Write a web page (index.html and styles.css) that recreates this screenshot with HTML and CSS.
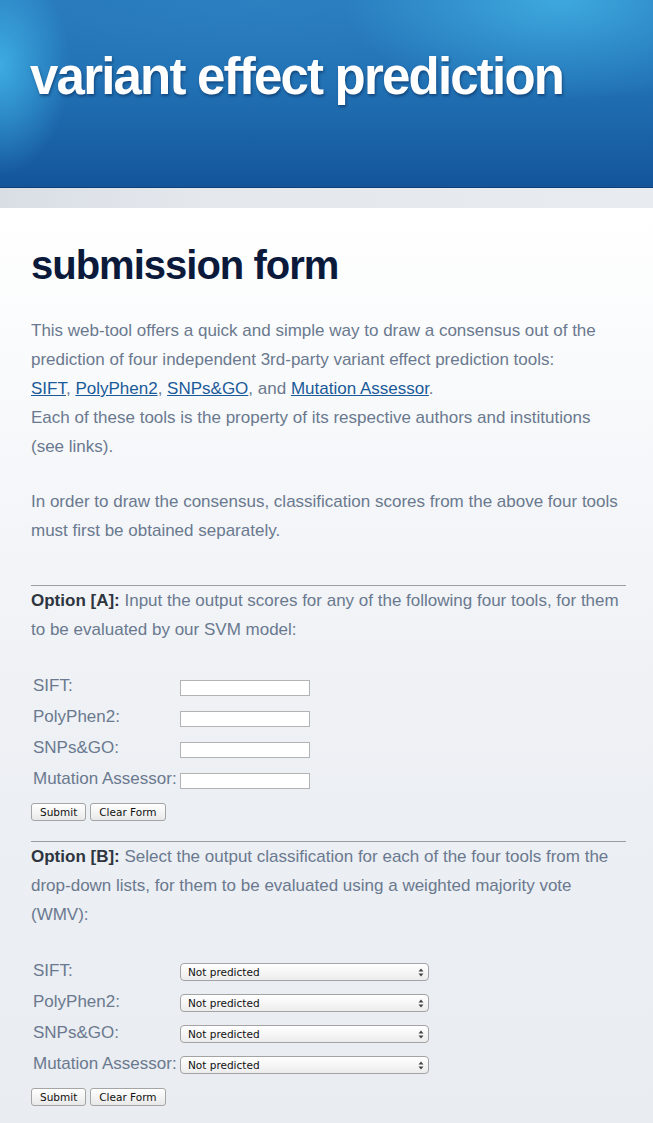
FILE: index.html
```html
<!DOCTYPE html>
<html>
<head>
<meta charset="utf-8">
<title>variant effect prediction</title>
<link rel="stylesheet" href="styles.css">
</head>
<body>
<header class="masthead">
  <h1 class="site-title">variant effect prediction</h1>
</header>
<div class="band"></div>
<main class="content">
  <h2 class="page-title">submission form</h2>
  <p class="text">This web-tool offers a quick and simple way to draw a consensus out of the prediction of four independent 3rd-party variant effect prediction tools:<br>
  <a href="#">SIFT</a>, <a href="#">PolyPhen2</a>, <a href="#">SNPs&amp;GO</a>, and <a href="#">Mutation Assessor</a>.<br>
  Each of these tools is the property of its respective authors and institutions (see links).</p>
  <p class="text">In order to draw the consensus, classification scores from the above four tools must first be obtained separately.</p>

  <hr class="rule rule-a">
  <form class="option">
    <p class="text"><b class="opt">Option [A]:</b> Input the output scores for any of the following four tools, for them to be evaluated by our SVM model:</p>
    <table class="fields">
      <tr><td class="lbl">SIFT:</td><td><input class="score" type="text"></td></tr>
      <tr><td class="lbl">PolyPhen2:</td><td><input class="score" type="text"></td></tr>
      <tr><td class="lbl">SNPs&amp;GO:</td><td><input class="score" type="text"></td></tr>
      <tr><td class="lbl">Mutation Assessor:</td><td><input class="score" type="text"></td></tr>
    </table>
    <div class="buttons">
      <button type="button" class="btn">Submit</button>
      <button type="reset" class="btn">Clear Form</button>
    </div>
  </form>

  <hr class="rule rule-b">
  <form class="option">
    <p class="text"><b class="opt">Option [B]:</b> Select the output classification for each of the four tools from the drop-down lists, for them to be evaluated using a weighted majority vote (WMV):</p>
    <table class="fields">
      <tr><td class="lbl">SIFT:</td><td><span class="sel"><select><option>Not predicted</option></select><svg class="arrows" width="6" height="9" viewBox="0 0 6 9"><path d="M0.5 3.5 L3 0.5 L5.5 3.5 Z M0.5 5.5 L3 8.5 L5.5 5.5 Z" fill="#444"/></svg></span></td></tr>
      <tr><td class="lbl">PolyPhen2:</td><td><span class="sel"><select><option>Not predicted</option></select><svg class="arrows" width="6" height="9" viewBox="0 0 6 9"><path d="M0.5 3.5 L3 0.5 L5.5 3.5 Z M0.5 5.5 L3 8.5 L5.5 5.5 Z" fill="#444"/></svg></span></td></tr>
      <tr><td class="lbl">SNPs&amp;GO:</td><td><span class="sel"><select><option>Not predicted</option></select><svg class="arrows" width="6" height="9" viewBox="0 0 6 9"><path d="M0.5 3.5 L3 0.5 L5.5 3.5 Z M0.5 5.5 L3 8.5 L5.5 5.5 Z" fill="#444"/></svg></span></td></tr>
      <tr><td class="lbl">Mutation Assessor:</td><td><span class="sel"><select><option>Not predicted</option></select><svg class="arrows" width="6" height="9" viewBox="0 0 6 9"><path d="M0.5 3.5 L3 0.5 L5.5 3.5 Z M0.5 5.5 L3 8.5 L5.5 5.5 Z" fill="#444"/></svg></span></td></tr>
    </table>
    <div class="buttons">
      <button type="button" class="btn">Submit</button>
      <button type="reset" class="btn">Clear Form</button>
    </div>
  </form>
</main>
</body>
</html>
```

FILE: styles.css
```css
html, body {
  margin: 0;
  padding: 0;
}
body {
  font-family: "Liberation Sans", Arial, Helvetica, sans-serif;
  background: #e9ecf0;
  min-height: 1123px;
}
.masthead {
  box-sizing: border-box;
  border-bottom: 1px solid #0c3f74;
  height: 188px;
  background:
    radial-gradient(ellipse 70px 110px at 0px 65px, rgba(70,190,240,0.75), rgba(70,190,240,0) 100%),
    radial-gradient(ellipse 220px 100px at 560px 0px, rgba(70,185,235,0.75), rgba(70,185,235,0) 100%),
    radial-gradient(ellipse 380px 90px at 260px 0px, rgba(60,150,210,0.35), rgba(60,150,210,0) 100%),
    linear-gradient(to bottom, #2475b7 0%, #2171b4 45%, #1a62a6 75%, #14559a 100%);
  padding: 51px 0 0 30px;
}
.site-title {
  margin: 0;
  font-size: 51px;
  line-height: 1;
  letter-spacing: -1.8px;
  font-weight: bold;
  color: #fff;
  text-shadow: 1px 2px 3px rgba(0,20,60,0.45);
}
.band {
  height: 20px;
  background: linear-gradient(to right, #d9dee5 0%, #e4e8ed 30%, #e8ebef 100%);
}
.content {
  padding: 37px 27px 20px 31px;
  background: linear-gradient(to bottom, #ffffff 0px, #f3f5f8 330px, #eceff3 600px, #e9ecf0 100%);
  min-height: 880px;
  box-sizing: border-box;
}
.page-title {
  margin: 0 0 31px 0;
  font-size: 40px;
  line-height: 1;
  letter-spacing: -1px;
  font-weight: bold;
  color: #0b1a3b;
}
.text {
  margin: 0 0 26px 0;
  font-size: 17px;
  line-height: 29px;
  color: #6a798f;
}
.text a {
  color: #1a5a99;
  text-decoration: underline;
}
.opt {
  color: #2e3540;
}
.rule {
  border: 0;
  border-top: 1px solid #9a9ea4;
  margin: 0;
  height: 0;
}
.rule-a {
  margin-top: 40px;
}
.rule-b {
  margin-top: 20px;
}
.option .text {
  margin-bottom: 27px;
}
.fields {
  border-collapse: separate;
  border-spacing: 0 2px;
  margin: -2px 0 0 0;
}
.fields td {
  padding: 0;
  font-size: 17px;
  line-height: 29px;
  color: #6a798f;
  vertical-align: middle;
}
.fields td.lbl {
  padding-left: 2px;
  width: 147px;
  white-space: nowrap;
}
.score {
  display: block;
  width: 130px;
  height: 16px;
  box-sizing: border-box;
  border: 1px solid #b3b3b3;
  background: #fff;
  margin: 4px 0 0 0;
  padding: 0;
}
.sel {
  position: relative;
  display: block;
  width: 249px;
  height: 18px;
  margin-top: 3px;
}
.sel select {
  -webkit-appearance: none;
  appearance: none;
  display: block;
  width: 249px;
  height: 18px;
  box-sizing: border-box;
  margin: 0;
  border: 1px solid #a3a3a3;
  border-radius: 4px;
  background: linear-gradient(to bottom, #ffffff 0%, #f6f6f6 50%, #ececec 100%);
  font-family: "DejaVu Sans", "Lucida Grande", sans-serif;
  font-size: 10.5px;
  color: #111;
  padding: 0 0 0 7px;
  line-height: 16px;
}
.arrows {
  position: absolute;
  right: 5px;
  top: 5px;
  pointer-events: none;
}
.buttons {
  display: flex;
  gap: 4px;
  margin-top: 8px;
}
.btn {
  height: 18px;
  box-sizing: border-box;
  margin: 0;
  padding: 0 8px;
  border: 1px solid #a5a5a5;
  border-radius: 3px;
  background: linear-gradient(to bottom, #ffffff 0%, #f4f4f4 50%, #e8e8e8 100%);
  font-family: "DejaVu Sans", "Lucida Grande", sans-serif;
  font-size: 10.5px;
  color: #111;
  line-height: 16px;
}
```
